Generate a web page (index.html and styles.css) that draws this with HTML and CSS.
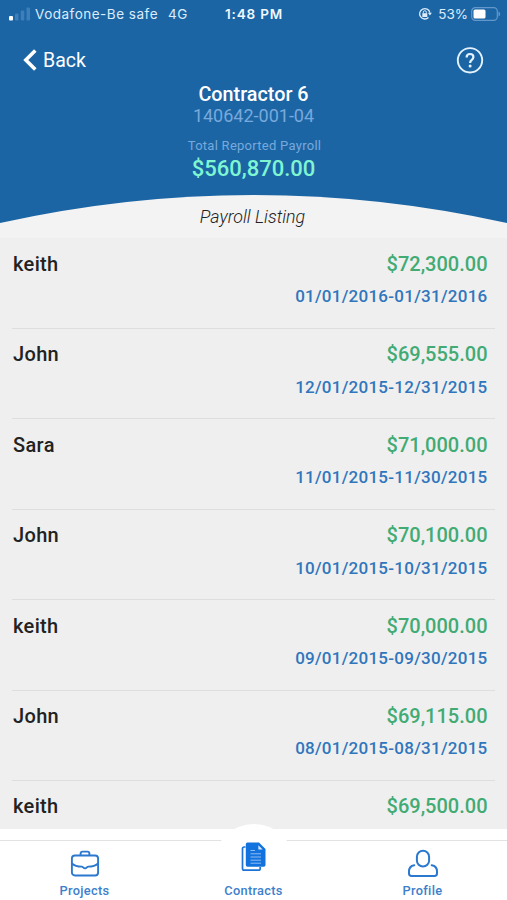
FILE: index.html
```html
<!DOCTYPE html>
<html lang="en">
<head>
  <meta charset="UTF-8">
  <title>Payroll Listing</title>
  <link rel="stylesheet" href="styles.css">
</head>
<body>
  <header>
    <div class="status">
      <div class="carrier">
        <svg class="signal" width="22" height="14" viewBox="0 0 22 14">
          <rect x="0" y="9" width="4" height="4.500" rx="1" fill="#fff"/>
          <rect x="6" y="6.500" width="3.500" height="7" rx="1" fill="#3f7fb9"/>
          <rect x="11.800" y="3.500" width="3.500" height="10" rx="1" fill="#3f7fb9"/>
          <rect x="17.500" y="0.500" width="3.500" height="13" rx="1" fill="#3f7fb9"/>
        </svg>
        <span>Vodafone-Be safe</span>
        <span class="network">4G</span>
      </div>
      <div class="time">1:48 PM</div>
      <div class="battery">
        <svg class="lock" width="14" height="14" viewBox="0 0 14 14" fill="none" stroke="#dcecfa" stroke-width="1.3">
          <path d="M10.500 10.500A5.200 5.200 0 1 1 11.900 5.600"/>
          <path d="M9.900 5.800h4L11.900 8.600z" fill="#dcecfa" stroke="none"/>
          <rect x="4.300" y="6.200" width="5" height="3.800" fill="#dcecfa" stroke="none"/>
          <path d="M5.300 6.300V5.200a1.500 1.500 0 0 1 3 0v1.100" stroke-width="1"/>
        </svg>
        <span class="percent">53%</span>
        <svg class="cell" width="30" height="14" viewBox="0 0 30 14">
          <rect x=".7" y=".7" width="25.6" height="12.6" rx="3.6" fill="none" stroke="#6298cb" stroke-width="1.2"/>
          <rect x="2.5" y="2.5" width="12" height="9" rx="1.5" fill="#fff"/>
          <path d="M27.5 4.5v5c2.2-1 2.2-4 0-5z" fill="#6298cb"/>
        </svg>
      </div>
    </div>

    <div class="navbar">
      <a class="back">
        <svg width="14" height="22" viewBox="0 0 14 22" fill="none" stroke="#fff" stroke-width="3.6">
          <path d="M12.3 1.5L2.8 11l9.5 9.5"/>
        </svg>
        <span>Back</span>
      </a>
      <svg class="help" width="28" height="28" viewBox="0 0 28 28" fill="none" stroke="#e4f3ff" stroke-width="1.9">
        <circle cx="14" cy="14.300" r="12.2"/>
        <path d="M10.6 11.500c0-2.200 1.400-3.500 3.400-3.500s3.400 1.200 3.400 3.100c0 2.900-3.300 2.800-3.300 5.800" stroke-width="2.200"/>
        <circle cx="14.1" cy="20" r="1.5" fill="#e4f3ff" stroke="none"/>
      </svg>
    </div>

    <div class="summary">
      <h1>Contractor 6</h1>
      <p class="number">140642-001-04</p>
      <p class="label">Total Reported Payroll</p>
      <p class="total">$560,870.00</p>
    </div>

    <div class="curve">
      <svg width="507" height="43" viewBox="0 0 507 43">
        <path d="M0 28Q253.5 -28 507 28V43H0z" fill="#f3f3f3"/>
      </svg>
      <h2>Payroll Listing</h2>
    </div>
  </header>

  <main>
    <div class="row">
      <span class="name">keith</span>
      <div class="info"><span class="amount">$72,300.00</span><span class="dates">01/01/2016-01/31/2016</span></div>
    </div>
    <div class="row">
      <span class="name">John</span>
      <div class="info"><span class="amount">$69,555.00</span><span class="dates">12/01/2015-12/31/2015</span></div>
    </div>
    <div class="row">
      <span class="name">Sara</span>
      <div class="info"><span class="amount">$71,000.00</span><span class="dates">11/01/2015-11/30/2015</span></div>
    </div>
    <div class="row">
      <span class="name">John</span>
      <div class="info"><span class="amount">$70,100.00</span><span class="dates">10/01/2015-10/31/2015</span></div>
    </div>
    <div class="row">
      <span class="name">keith</span>
      <div class="info"><span class="amount">$70,000.00</span><span class="dates">09/01/2015-09/30/2015</span></div>
    </div>
    <div class="row">
      <span class="name">John</span>
      <div class="info"><span class="amount">$69,115.00</span><span class="dates">08/01/2015-08/31/2015</span></div>
    </div>
    <div class="row">
      <span class="name">keith</span>
      <div class="info"><span class="amount">$69,500.00</span></div>
    </div>
  </main>

  <footer>
    <div class="bump"></div>
    <nav>
      <a class="tab">
        <svg width="30" height="30" viewBox="0 0 30 30" fill="none" stroke="#2b78cf" stroke-width="1.9" stroke-linejoin="round">
          <rect x="1.9" y="6.5" width="26.2" height="20" rx="3"/>
          <path d="M10.6 6.3V4.6a2 2 0 0 1 2-2h4.8a2 2 0 0 1 2 2v1.7"/>
          <path d="M2 14.5c2.5 2.4 5.6 3.1 9.8 3.1 1.2 0 1.6 1.8 3.2 1.8s2-1.8 3.2-1.8c4.2 0 7.3-.7 9.8-3.1"/>
        </svg>
        <span>Projects</span>
      </a>
      <a class="tab contracts">
        <svg width="26" height="30" viewBox="0 0 26 30">
          <path d="M4.5 5H3.2a1.7 1.7 0 0 0-1.7 1.7V26.5a1.7 1.7 0 0 0 1.7 1.7H17.5a1.7 1.7 0 0 0 1.7-1.7V25" fill="none" stroke="#1d74d6" stroke-width="1.7"/>
          <path d="M6.5.5H18l6.500 6.500v16a1.7 1.7 0 0 1-1.7 1.7H6.5A1.7 1.7 0 0 1 4.8 23V2.200A1.7 1.7 0 0 1 6.5.5z" fill="#1273de"/>
          <path d="M17.4 3.300v4.200h4.200z" fill="#d9e9fb"/>
          <path d="M9.5 8.500h4.500M9.5 11.800h10.500M9.5 15h10.500M9.5 18.200h10.500M9.5 21.200h10.500" stroke="#8fbdf2" stroke-width="1"/>
        </svg>
        <span>Contracts</span>
      </a>
      <a class="tab">
        <svg width="30" height="30" viewBox="0 0 30 30" fill="none" stroke="#2b78cf" stroke-width="2" stroke-linecap="round">
          <rect x="8.9" y="1.7" width="12.2" height="15.8" rx="6.1"/>
          <path d="M6.3 16.2C3 16.8 1 19.2 1 22.3v2.200c0 1.500 1 2.400 2.500 2.400h23c1.500 0 2.500-.9 2.500-2.400v-2.200c0-3.100-2-5.500-5.300-6.100"/>
        </svg>
        <span>Profile</span>
      </a>
    </nav>
  </footer>
</body>
</html>
```
FILE: styles.css
```css
* {
  box-sizing: border-box;
}

body {
  margin: 0;
  height: 900px;
  display: flex;
  flex-direction: column;
  overflow: hidden;
  font-family: Roboto, sans-serif;
  background-color: #efefef;
}

h1, h2, p {
  margin: 0;
}

header {
  height: 238px;
  flex: none;
  display: flex;
  flex-direction: column;
  background-color: #1b65a5;
  color: white;
}

.status {
  height: 28px;
  padding: 0 6px 0 9px;
  display: grid;
  grid-template-columns: 1fr auto 1fr;
  align-items: center;
  font-family: Inter, sans-serif;
  font-size: 13.5px;
  line-height: 28px;
  letter-spacing: 0.5px;
  color: #dcecfa;
}

.carrier, .battery {
  display: flex;
  align-items: center;
}

.signal {
  margin-right: 4px;
}

.network {
  margin-left: 10px;
}

.time {
  font-weight: 600;
  letter-spacing: 0.8px;
  color: #f0f8ff;
  margin-right: 2px;
}

.battery {
  justify-content: flex-end;
}

.percent {
  letter-spacing: 0;
}

.lock {
  margin-right: 6px;
}

.cell {
  margin-left: 3px;
  margin-top: -1px;
}

.navbar {
  height: 56px;
  padding: 8px 23px 0;
  display: flex;
  justify-content: space-between;
  align-items: center;
}

.back {
  display: flex;
  align-items: center;
  gap: 6px;
  font-size: 19.5px;
}

.summary {
  height: 111px;
  padding-top: 1px;
  text-align: center;
}

.summary h1 {
  font-size: 19.8px;
  font-weight: 500;
  line-height: 20px;
}

.number {
  font-size: 18px;
  line-height: 21px;
  color: #78a9dc;
}

.label {
  margin-top: 10px;
  padding-left: 2px;
  font-size: 13px;
  line-height: 19px;
  letter-spacing: 0.27px;
  color: #78a9dc;
}

.total {
  font-size: 22px;
  font-weight: 500;
  line-height: 27px;
  color: #7ff5d2;
}

.curve {
  height: 43px;
  display: grid;
}

.curve svg, .curve h2 {
  grid-area: 1 / 1;
}

.curve h2 {
  padding: 11px 2px 0 0;
  text-align: center;
  font-size: 17.8px;
  font-weight: 300;
  font-style: italic;
  line-height: 22px;
  color: #222;
}

main {
  height: 591px;
  flex: none;
  padding: 0.6px 12px 0;
  overflow: hidden;
}

.row {
  height: 90.4px;
  padding: 13.4px 7.5px 0 1px;
  display: flex;
  justify-content: space-between;
  border-bottom: 1px solid #dedede;
}

.name {
  font-size: 20px;
  font-weight: 500;
  line-height: 24px;
  letter-spacing: 0.35px;
  color: #222;
}

.info {
  display: flex;
  flex-direction: column;
  align-items: flex-end;
}

.amount {
  font-size: 20px;
  font-weight: 500;
  line-height: 24px;
  color: #42ab74;
}

.dates {
  margin-top: 9.5px;
  font-size: 17px;
  font-weight: 500;
  line-height: 22px;
  letter-spacing: 0.26px;
  color: #3076bd;
}

footer {
  position: relative;
  height: 71px;
  padding-top: 11px;
  background-color: white;
}

/* white disc rising over the list behind the middle tab */
.bump {
  position: absolute;
  left: 213px;
  top: -5px;
  width: 82px;
  height: 76px;
  border-radius: 41px 41px 0 0;
  background-color: white;
}

nav {
  height: 60px;
  padding-top: 8px;
  display: grid;
  grid-template-columns: repeat(3, 1fr);
  border-top: 1px solid #e2e2e2;
}

.tab {
  position: relative;
  display: flex;
  flex-direction: column;
  align-items: center;
  gap: 4px;
  font-size: 12.8px;
  font-weight: 500;
  line-height: 16px;
  letter-spacing: 0.3px;
  color: #3d80cc;
}

.contracts {
  margin-top: -7px;
  gap: 11px;
}
```
